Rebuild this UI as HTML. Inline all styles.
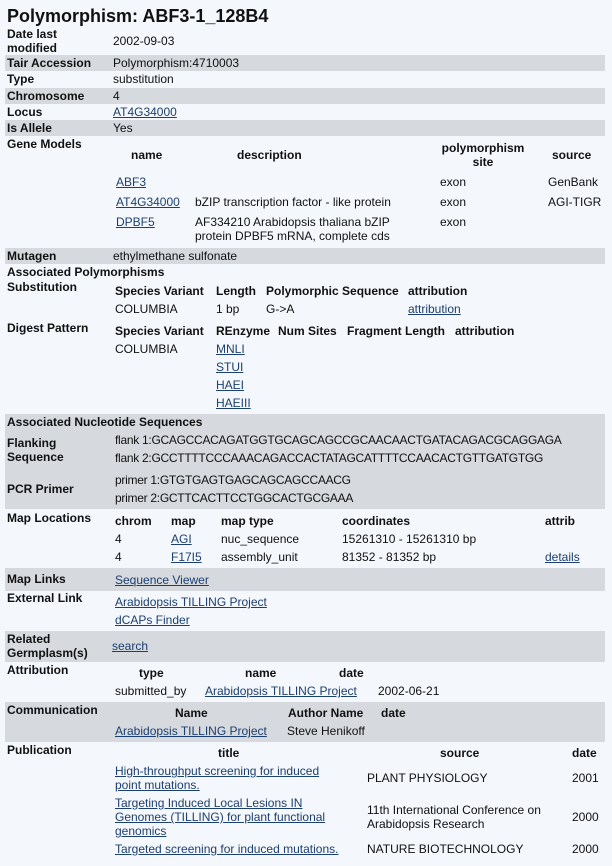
<!DOCTYPE html>
<html><head><meta charset="utf-8"><style>
body{margin:0;width:612px;height:866px;background:#f4f7fc;font-family:"Liberation Sans",Arial,sans-serif;font-size:12px;color:#111;position:relative;overflow:hidden}
div{position:absolute;white-space:nowrap;line-height:14px}
.g{background:#d6d9de;left:5px;width:600px}
.b{font-weight:bold}
a{color:#1c3f6e;text-decoration:underline}
.c{text-align:center}
.s{letter-spacing:-0.28px}
</style></head><body>
<div class="g" style="top:55px;height:16px"></div>
<div class="g" style="top:88px;height:16px"></div>
<div class="g" style="top:120px;height:16px"></div>
<div class="g" style="top:248px;height:16px"></div>
<div class="g" style="top:414px;height:95px"></div>
<div class="g" style="top:568px;height:23px"></div>
<div class="g" style="top:631px;height:31px"></div>
<div class="g" style="top:702px;height:40px"></div>

<div class="b" style="left:7px;top:4px;font-size:18px;line-height:24px">Polymorphism: ABF3-1_128B4</div>

<div class="b" style="left:7px;top:27px">Date last<br>modified</div><div style="left:113px;top:34px">2002-09-03</div>
<div class="b" style="left:7px;top:56px">Tair Accession</div><div style="left:113px;top:56px">Polymorphism:4710003</div>
<div class="b" style="left:7px;top:72px">Type</div><div style="left:113px;top:72px">substitution</div>
<div class="b" style="left:7px;top:89px">Chromosome</div><div style="left:113px;top:89px">4</div>
<div class="b" style="left:7px;top:105px">Locus</div><div style="left:113px;top:105px"><a>AT4G34000</a></div>
<div class="b" style="left:7px;top:121px">Is Allele</div><div style="left:113px;top:121px">Yes</div>
<div class="b" style="left:7px;top:137px">Gene Models</div>
<div class="b" style="left:131px;top:148px">name</div>
<div class="b" style="left:237px;top:148px">description</div>
<div class="b c" style="left:433px;top:141px;width:100px">polymorphism<br>site</div>
<div class="b" style="left:552px;top:148px">source</div>
<div style="left:116px;top:175px"><a>ABF3</a></div><div style="left:440px;top:175px">exon</div><div style="left:548px;top:175px">GenBank</div>
<div style="left:116px;top:195px"><a>AT4G34000</a></div><div style="left:195px;top:195px">bZIP transcription factor - like protein</div><div style="left:440px;top:195px">exon</div><div style="left:548px;top:195px">AGI-TIGR</div>
<div style="left:116px;top:215px"><a>DPBF5</a></div><div style="left:195px;top:215px">AF334210 Arabidopsis thaliana bZIP<br>protein DPBF5 mRNA, complete cds</div><div style="left:440px;top:215px">exon</div>
<div class="b" style="left:7px;top:249px">Mutagen</div><div style="left:113px;top:249px">ethylmethane sulfonate</div>

<div class="b" style="left:7px;top:265px">Associated Polymorphisms</div>
<div class="b" style="left:7px;top:280px">Substitution</div>
<div class="b" style="left:115px;top:284px">Species Variant</div><div class="b" style="left:216px;top:284px">Length</div><div class="b" style="left:266px;top:284px">Polymorphic Sequence</div><div class="b" style="left:408px;top:284px">attribution</div>
<div style="left:115px;top:302px">COLUMBIA</div><div style="left:216px;top:302px">1 bp</div><div style="left:266px;top:302px">G-&gt;A</div><div style="left:408px;top:302px"><a>attribution</a></div>
<div class="b" style="left:7px;top:321px">Digest Pattern</div>
<div class="b" style="left:115px;top:324px">Species Variant</div><div class="b" style="left:216px;top:324px">REnzyme</div><div class="b" style="left:278px;top:324px">Num Sites</div><div class="b" style="left:347px;top:324px">Fragment Length</div><div class="b" style="left:455px;top:324px">attribution</div>
<div style="left:115px;top:342px">COLUMBIA</div>
<div style="left:216px;top:342px"><a>MNLI</a></div>
<div style="left:216px;top:360px"><a>STUI</a></div>
<div style="left:216px;top:378px"><a>HAEI</a></div>
<div style="left:216px;top:396px"><a>HAEIII</a></div>

<div class="b" style="left:7px;top:415px">Associated Nucleotide Sequences</div>
<div class="b" style="left:7px;top:436px">Flanking<br>Sequence</div>
<div class="s" style="left:115px;top:433px">flank 1:GCAGCCACAGATGGTGCAGCAGCCGCAACAACTGATACAGACGCAGGAGA</div>
<div class="s" style="left:115px;top:451px">flank 2:GCCTTTTCCCAAACAGACCACTATAGCATTTTCCAACACTGTTGATGTGG</div>
<div class="b" style="left:7px;top:482px">PCR Primer</div>
<div class="s" style="left:115px;top:473px">primer 1:GTGTGAGTGAGCAGCAGCCAACG</div>
<div class="s" style="left:115px;top:491px">primer 2:GCTTCACTTCCTGGCACTGCGAAA</div>

<div class="b" style="left:7px;top:511px">Map Locations</div>
<div class="b" style="left:115px;top:514px">chrom</div><div class="b" style="left:171px;top:514px">map</div><div class="b" style="left:221px;top:514px">map type</div><div class="b" style="left:342px;top:514px">coordinates</div><div class="b" style="left:545px;top:514px">attrib</div>
<div style="left:115px;top:532px">4</div><div style="left:171px;top:532px"><a>AGI</a></div><div style="left:221px;top:532px">nuc_sequence</div><div style="left:342px;top:532px">15261310 - 15261310 bp</div>
<div style="left:115px;top:550px">4</div><div style="left:171px;top:550px"><a>F17I5</a></div><div style="left:221px;top:550px">assembly_unit</div><div style="left:342px;top:550px">81352 - 81352 bp</div><div style="left:545px;top:550px"><a>details</a></div>

<div class="b" style="left:7px;top:572px">Map Links</div><div style="left:115px;top:573px"><a>Sequence Viewer</a></div>
<div class="b" style="left:7px;top:591px">External Link</div>
<div style="left:115px;top:595px"><a>Arabidopsis TILLING Project</a></div>
<div style="left:115px;top:613px"><a>dCAPs Finder</a></div>
<div class="b" style="left:7px;top:632px">Related<br>Germplasm(s)</div><div style="left:112px;top:639px"><a>search</a></div>

<div class="b" style="left:7px;top:663px">Attribution</div>
<div class="b" style="left:139px;top:666px">type</div><div class="b" style="left:245px;top:666px">name</div><div class="b" style="left:339px;top:666px">date</div>
<div style="left:115px;top:684px">submitted_by</div><div style="left:205px;top:684px"><a>Arabidopsis TILLING Project</a></div><div style="left:378px;top:684px">2002-06-21</div>

<div class="b" style="left:7px;top:703px">Communication</div>
<div class="b" style="left:175px;top:706px">Name</div><div class="b" style="left:288px;top:706px">Author Name</div><div class="b" style="left:381px;top:706px">date</div>
<div style="left:115px;top:724px"><a>Arabidopsis TILLING Project</a></div><div style="left:287px;top:724px">Steve Henikoff</div>

<div class="b" style="left:7px;top:743px">Publication</div>
<div class="b" style="left:218px;top:746px">title</div><div class="b" style="left:440px;top:746px">source</div><div class="b" style="left:572px;top:746px">date</div>
<div style="left:115px;top:764px"><a>High-throughput screening for induced <br>point mutations.</a></div>
<div style="left:367px;top:771px">PLANT PHYSIOLOGY</div><div style="left:572px;top:771px">2001</div>
<div style="left:115px;top:796px"><a>Targeting Induced Local Lesions IN <br>Genomes (TILLING) for plant functional <br>genomics</a></div>
<div style="left:367px;top:803px">11th International Conference on<br>Arabidopsis Research</div><div style="left:572px;top:810px">2000</div>
<div style="left:115px;top:842px"><a>Targeted screening for induced mutations.</a></div>
<div style="left:367px;top:842px">NATURE BIOTECHNOLOGY</div><div style="left:572px;top:842px">2000</div>
</body></html>
